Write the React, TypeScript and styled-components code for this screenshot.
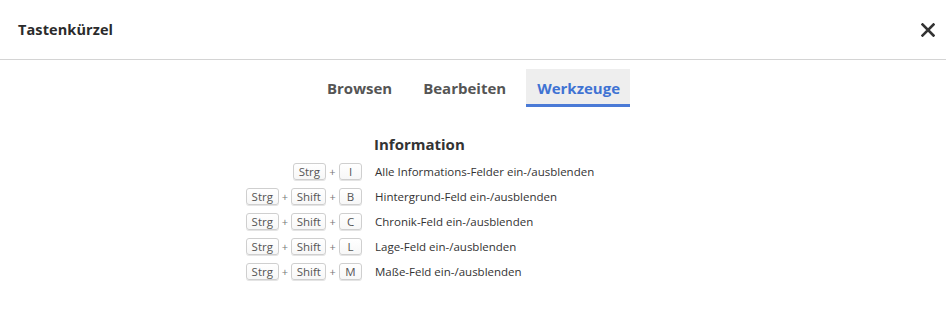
import React from 'react';
import styled, { createGlobalStyle } from 'styled-components';

const GlobalStyle = createGlobalStyle`
  html, body {
    margin: 0;
    padding: 0;
    background: #fff;
  }
  body {
    font-family: "Open Sans", "Noto Sans", sans-serif;
    color: #333;
  }
`;

interface IShortcut {
  keys: string[];
  label: string;
}

const shortcuts: IShortcut[] = [
  { keys: ['Strg', 'I'], label: 'Alle Informations-Felder ein-/ausblenden' },
  { keys: ['Strg', 'Shift', 'B'], label: 'Hintergrund-Feld ein-/ausblenden' },
  { keys: ['Strg', 'Shift', 'C'], label: 'Chronik-Feld ein-/ausblenden' },
  { keys: ['Strg', 'Shift', 'L'], label: 'Lage-Feld ein-/ausblenden' },
  { keys: ['Strg', 'Shift', 'M'], label: 'Maße-Feld ein-/ausblenden' },
];

const tabs = ['Browsen', 'Bearbeiten', 'Werkzeuge'];

const CloseIcon = () => (
  <svg width="14" height="14" viewBox="0 0 14 14">
    <path d="M1.5 1.5 L12.5 12.5 M12.5 1.5 L1.5 12.5" stroke="#333" strokeWidth="2.6" strokeLinecap="square" />
  </svg>
);

const App = () => {
  return (
    <Dialog>
      <GlobalStyle />
      <Header>
        <Title>Tastenkürzel</Title>
        <CloseButton aria-label="Schließen">
          <CloseIcon />
        </CloseButton>
      </Header>
      <TabBar>
        {tabs.map((t) => (
          <Tab key={t} active={t === 'Werkzeuge'}>{t}</Tab>
        ))}
      </TabBar>
      <Table>
        <span />
        <SectionTitle>Information</SectionTitle>
        {shortcuts.map((s) => (
          <React.Fragment key={s.label}>
            <KeyCell>
              {s.keys.map((k, i) => (
                <React.Fragment key={k}>
                  {i > 0 && <Plus>+</Plus>}
                  <Key wide={k.length > 1}>{k}</Key>
                </React.Fragment>
              ))}
            </KeyCell>
            <Label>{s.label}</Label>
          </React.Fragment>
        ))}
      </Table>
    </Dialog>
  );
};

const Dialog = styled.div`
  width: 946px;
  height: 333px;
  background: #fff;
`;

const Header = styled.header`
  height: 60px;
  border-bottom: 1px solid #d4d4d4;
  display: flex;
  align-items: center;
  justify-content: space-between;
  padding: 0 11px 0 18px;
  box-sizing: border-box;
`;

const Title = styled.h1`
  margin: 0;
  font-size: 14.5px;
  font-weight: 700;
  color: #2b2b2b;
  letter-spacing: 0.1px;
`;

const CloseButton = styled.button`
  border: 0;
  background: none;
  padding: 0;
  width: 14px;
  height: 14px;
  cursor: pointer;
  display: flex;
`;

const TabBar = styled.nav`
  display: flex;
  justify-content: center;
  gap: 10px;
  margin-top: 9px;
`;

const Tab = styled.div<{ active?: boolean }>`
  height: 38px;
  box-sizing: border-box;
  padding: 2px 10px 0 11px;
  display: flex;
  align-items: center;
  font-size: 15px;
  font-weight: 700;
  color: ${(p) => (p.active ? '#3f73d3' : '#555')};
  background: ${(p) => (p.active ? '#eeeeee' : 'transparent')};
  border-bottom: 3px solid ${(p) => (p.active ? '#4a7ad6' : 'transparent')};
`;

const Table = styled.div`
  display: grid;
  grid-template-columns: 122px 332px;
  grid-template-rows: 31px;
  grid-auto-rows: 25px;
  justify-content: center;
  margin-top: 21px;
`;

const SectionTitle = styled.h2`
  margin: 0;
  padding-left: 6px;
  font-size: 15px;
  font-weight: 700;
  color: #333;
  align-self: center;
`;

const KeyCell = styled.div`
  display: flex;
  align-items: center;
  justify-content: flex-end;
  padding-right: 6px;
`;

const Key = styled.span<{ wide?: boolean }>`
  height: 17px;
  box-sizing: border-box;
  min-width: 23px;
  padding: 0 ${(p) => (p.wide ? '5px' : '0')};
  display: inline-flex;
  align-items: center;
  justify-content: center;
  border: 1px solid #cfcfcf;
  border-radius: 3px;
  background: linear-gradient(#ffffff, #f7f7f7);
  box-shadow: 0 1px 0 #e4e4e4;
  font-size: 11.5px;
  color: #555;
`;

const Plus = styled.span`
  width: 13px;
  text-align: center;
  font-size: 11px;
  color: #777;
`;

const Label = styled.div`
  display: flex;
  align-items: center;
  padding-left: 7px;
  font-size: 11.5px;
  color: #333;
`;

export default App;
